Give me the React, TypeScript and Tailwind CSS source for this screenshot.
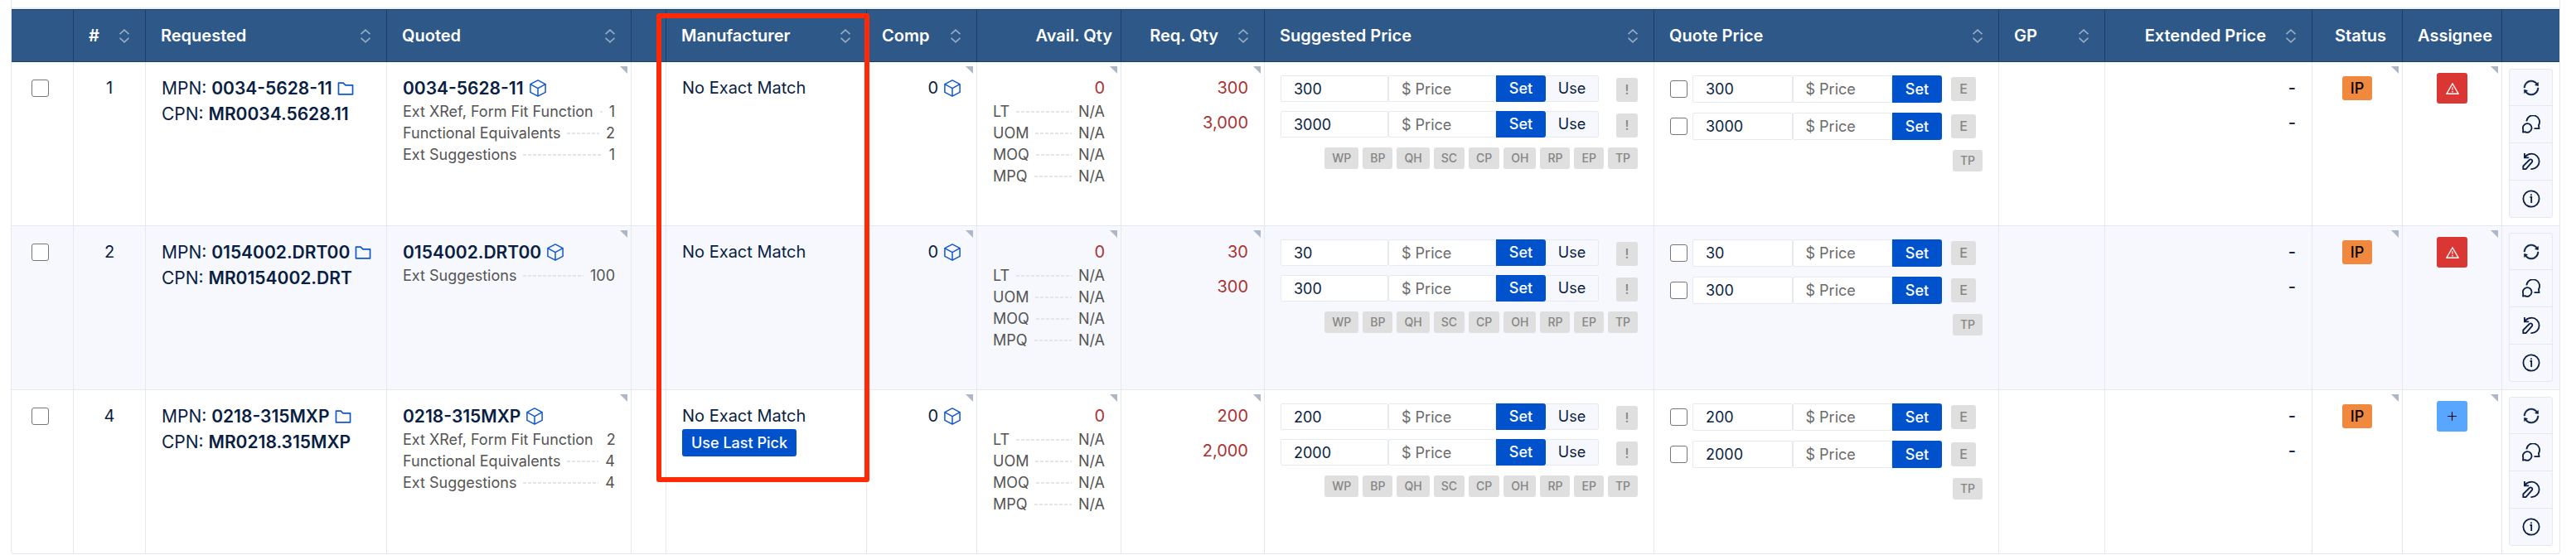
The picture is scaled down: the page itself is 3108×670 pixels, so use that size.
import type { ReactNode } from 'react'
import { AiOutlineFolder, AiOutlinePlus, AiOutlineSync, AiOutlineWarning } from 'react-icons/ai'

type Line = {
  id: number
  mpn: string
  cpn: string
  matches: { label: string; count: number }[]
  quantities: number[]
  lastPick?: boolean
  assigned?: boolean
}

const lines: Line[] = [
  {
    id: 1, mpn: '0034-5628-11', cpn: 'MR0034.5628.11', quantities: [300, 3000],
    matches: [
      { label: 'Ext XRef, Form Fit Function', count: 1 },
      { label: 'Functional Equivalents', count: 2 },
      { label: 'Ext Suggestions', count: 1 },
    ],
  },
  {
    id: 2, mpn: '0154002.DRT00', cpn: 'MR0154002.DRT', quantities: [30, 300],
    matches: [{ label: 'Ext Suggestions', count: 100 }],
  },
  {
    id: 4, mpn: '0218-315MXP', cpn: 'MR0218.315MXP', quantities: [200, 2000], lastPick: true, assigned: true,
    matches: [
      { label: 'Ext XRef, Form Fit Function', count: 2 },
      { label: 'Functional Equivalents', count: 4 },
      { label: 'Ext Suggestions', count: 4 },
    ],
  },
]

const sources = ['WP', 'BP', 'QH', 'SC', 'CP', 'OH', 'RP', 'EP', 'TP']

const thClass = 'relative h-16 border-y border-r border-[#1d4068] last:border-r-0 pl-[18px] pr-[19px] py-0 font-semibold text-left whitespace-nowrap'
const tdClass = 'relative border-r border-b border-[#e5e8ee] last:border-r-0 group-last:border-b-0 px-[19px] pt-4 align-top'
const checkboxClass = 'appearance-none block size-[21px] shrink-0 rounded-[3px] border border-[#767676] bg-white checked:bg-[#0052cc]'
const inputClass = 'h-full flex-1 min-w-0 rounded-xs border border-[#e5e9f0] bg-white px-[15px] text-lg text-[#091e42] placeholder:text-[#6b6b6b] focus:outline-none focus:border-[#0052cc]'
const setClass = 'h-full w-[60px] shrink-0 rounded-r-[3px] bg-[#0052cc] text-lg font-medium text-white'
const tagClass = 'rounded-[3px] bg-[#dfdfdf] font-medium text-[#858585]'
const partClass = 'text-[21px] font-semibold'

function SortIcon() {
  return (
    <svg viewBox="0 0 12 17" className="w-3 h-[17px]" fill="none" stroke="currentColor" strokeWidth="1.8">
      <path d="M.5 6.2 6 1.2l5.5 5M.5 10.8 6 15.8l5.5-5" />
    </svg>
  )
}

function BoxIcon() {
  return (
    <svg viewBox="0 0 20 21" className="w-5 h-[21px]" fill="none" stroke="currentColor" strokeWidth="1.5" strokeLinejoin="round">
      <path d="M10 .9 19.1 5.7v9.6L10 20.1.9 15.3V5.7zM.9 5.7 10 10.7l9.1-5M10 10.7v9.4" />
    </svg>
  )
}

function ChatIcon() {
  return (
    <svg viewBox="0 0 22 22" className="size-[22px]" fill="none" stroke="currentColor" strokeWidth="1.8" strokeLinejoin="round">
      <path d="M5.3 7.3a7.9 7.9 0 1 1 14.6 5l.7 3.9h-6.1" />
      <path d="M1 20.6l.3-3.1a5.3 5.3 0 1 1 2.3 2.6z" />
    </svg>
  )
}

function HistoryIcon() {
  return (
    <svg viewBox="0 0 22 22" className="size-[22px]" fill="none" stroke="currentColor" strokeWidth="1.8">
      <path d="M2.9 1v5.4h5.3M3.2 6C5.2 3 8.2 1.7 11.4 1.7a9.2 9.2 0 0 1 0 18.4h-1" />
      <path d="M1.3 20.200v-3.700l7.500-7.500a2 2 0 0 1 2.900 0 2 2 0 0 1 0 2.900l-7.200 8.300z" strokeLinejoin="round" />
    </svg>
  )
}

function InfoIcon() {
  return (
    <svg viewBox="0 0 22 22" className="size-[22px]" fill="none" stroke="currentColor" strokeWidth="1.8">
      <circle cx="11" cy="11" r="9.6" />
      <path d="M9.500 9h1.700v7" />
      <circle cx="11" cy="6.3" r="1" fill="currentColor" stroke="none" />
    </svg>
  )
}

function Th({ children, right }: { children: string; right?: boolean }) {
  return (
    <div className="flex items-center gap-6">
      <span className={right ? 'flex-1 text-right' : 'flex-1'}>{children}</span>
      <button type="button" aria-label={`Sort by ${children}`} className="text-[#96abc3]"><SortIcon /></button>
    </div>
  )
}

function Corner() {
  return <span className="absolute top-[5px] right-1 size-[9px] bg-[#acb8c5] [clip-path:polygon(0_0,100%_0,100%_100%)]" />
}

function Leader({ label, value }: { label: string; value: ReactNode }) {
  return (
    <div className="flex items-center gap-2 h-[26px] text-lg leading-[26px] text-[#545454] whitespace-nowrap">
      <span>{label}</span>
      <span className="flex-1 h-0.5 bg-[repeating-linear-gradient(90deg,#e3e6e9_0_4px,transparent_4px_6px)]" />
      <span>{value}</span>
    </div>
  )
}

function Row({ line }: { line: Line }) {
  return (
    <tr className="group even:bg-[#f6f8fd]">
      <td className={tdClass}>
        <input type="checkbox" aria-label={`Select line ${line.id}`} className={`${checkboxClass} mt-[5px] ml-[5px]`} />
      </td>
      <td className={`${tdClass} text-center`}>{line.id}</td>
      <td className={`${tdClass} text-[21px]`}>
        <div className="flex items-center gap-1 h-[31px] whitespace-nowrap">
          <span>MPN: <b className={partClass}>{line.mpn}</b></span>
          <button type="button" aria-label="Open folder" className="text-[#1057cb]"><AiOutlineFolder size={24} /></button>
        </div>
        <div>CPN: <b className={partClass}>{line.cpn}</b></div>
      </td>
      <td className={tdClass}>
        <Corner />
        <div className="flex items-center gap-[7px] h-[31px]">
          <b className={partClass}>{line.mpn}</b>
          <button type="button" aria-label="Part details" className="text-[#1057cb]"><BoxIcon /></button>
        </div>
        {line.matches.map(m => <Leader key={m.label} label={m.label} value={m.count} />)}
      </td>
      <td className={tdClass} />
      <td className={tdClass}>
        No Exact Match
        {line.lastPick && (
          <button type="button" className="block h-[33px] rounded-[3px] bg-[#0052cc] px-[11px] text-lg font-medium text-white">Use Last Pick</button>
        )}
      </td>
      <td className={tdClass}>
        <Corner />
        <div className="flex items-center justify-end gap-[7px] h-[31px]">
          0
          <button type="button" aria-label="Competitor parts" className="text-[#1057cb]"><BoxIcon /></button>
        </div>
      </td>
      <td className={tdClass}>
        <Corner />
        <div className="text-right text-[#a93434]">0</div>
        {['LT', 'UOM', 'MOQ', 'MPQ'].map(k => <Leader key={k} label={k} value="N/A" />)}
      </td>
      <td className={`${tdClass} text-right text-[#a93434]`}>
        <Corner />
        <div className="space-y-[11px]">
          {line.quantities.map(q => <div key={q}>{q.toLocaleString('en-US')}</div>)}
        </div>
      </td>
      <td className={tdClass}>
        <div className="space-y-[11px]">
          {line.quantities.map(q => (
            <div key={q} className="flex items-end h-8">
              <input aria-label="Suggested quantity" defaultValue={q} className={inputClass} />
              <input aria-label="Suggested price" placeholder="$ Price" className={inputClass} />
              <button type="button" className={setClass}>Set</button>
              <button type="button" className="h-full w-16 shrink-0 rounded-r-[3px] border border-l-0 border-[#e5e9f0] bg-[#f6f8fd] text-lg">Use</button>
              <span className={`${tagClass} ml-[21px] w-[26px] h-[29px] text-center text-base leading-[29px]`}>!</span>
            </div>
          ))}
        </div>
        <div className="flex justify-end gap-[5px] mt-3">
          {sources.map(s => <span key={s} className={`${tagClass} h-[26px] px-[9px] text-sm leading-[26px]`}>{s}</span>)}
        </div>
      </td>
      <td className={tdClass}>
        <div className="space-y-3">
          {line.quantities.map(q => (
            <div key={q} className="flex items-center h-[33px] pr-2">
              <input type="checkbox" aria-label={`Quote ${q}`} className={`${checkboxClass} mr-1.5`} />
              <input aria-label="Quote quantity" defaultValue={q} className={inputClass} />
              <input aria-label="Quote price" placeholder="$ Price" className={inputClass} />
              <button type="button" className={setClass}>Set</button>
              <span className={`${tagClass} ml-[11px] w-[30px] h-[29px] text-center text-base leading-[29px]`}>E</span>
            </div>
          ))}
        </div>
        <div className="flex justify-end mt-3">
          <span className={`${tagClass} h-[26px] px-[9px] text-sm leading-[26px]`}>TP</span>
        </div>
      </td>
      <td className={tdClass} />
      <td className={`${tdClass} text-right font-medium`}>
        <div className="space-y-[11px]">
          {line.quantities.map(q => <div key={q}>-</div>)}
        </div>
      </td>
      <td className={tdClass}>
        <Corner />
        <div className="mx-auto mt-px w-9 h-[29px] rounded-[3px] bg-[#f0883e] text-center text-lg leading-[29px] font-medium text-black">IP</div>
      </td>
      <td className={`${tdClass} !pt-[13px]`}>
        <Corner />
        {line.assigned ? (
          <button type="button" aria-label="Assign" className="mx-auto flex size-[37px] items-center justify-center rounded-[3px] bg-[#58a6ff] text-black"><AiOutlinePlus size={15} /></button>
        ) : (
          <button type="button" aria-label="Unassigned" className="mx-auto flex size-[37px] items-center justify-center rounded-[3px] bg-[#da3633] text-white"><AiOutlineWarning size={18} /></button>
        )}
      </td>
      <td className={`${tdClass} !px-2 !pt-2 pb-[9px]`}>
        <div className="divide-y divide-[#e5e8ee] rounded-[3px] border border-[#e5e8ee] bg-[#f6f8fd]">
          <button type="button" aria-label="Refresh" className="flex h-11 w-full items-center justify-center"><AiOutlineSync size={22} strokeWidth={20} stroke="currentColor" /></button>
          <button type="button" aria-label="Comments" className="flex h-[45px] w-full items-center justify-center"><ChatIcon /></button>
          <button type="button" aria-label="History" className="flex h-[45px] w-full items-center justify-center"><HistoryIcon /></button>
          <button type="button" aria-label="Info" className="flex h-11 w-full items-center justify-center"><InfoIcon /></button>
        </div>
      </td>
    </tr>
  )
}

export default function App() {
  return (
    <div className="bg-white pr-[19px] pl-[13px] font-['Inter',sans-serif] text-xl leading-[31px] text-[#091e42]">
      <div className="rounded-b border-x border-b border-[#e5e8ee]">
        <div className="h-[11px] border-b-2 border-[#e6eef6]" />
        <table className="w-full table-fixed border-separate border-spacing-0">
          <colgroup>
            <col className="w-[75px]" />
            <col className="w-[87px]" />
            <col className="w-[291px]" />
            <col className="w-[295px]" />
            <col className="w-[42px]" />
            <col className="w-[242px]" />
            <col className="w-[133px]" />
            <col className="w-[174px]" />
            <col className="w-[173px]" />
            <col className="w-[470px]" />
            <col className="w-[416px]" />
            <col className="w-[128px]" />
            <col className="w-[250px]" />
            <col className="w-[109px]" />
            <col className="w-[120px]" />
            <col className="w-[69px]" />
          </colgroup>
          <thead className="bg-[#2d5888] text-white">
            <tr>
              <th className={thClass} />
              <th className={thClass}><Th>#</Th></th>
              <th className={thClass}><Th>Requested</Th></th>
              <th className={thClass}><Th>Quoted</Th></th>
              <th className={thClass} />
              <th className={thClass}>
                <Th>Manufacturer</Th>
                {/* column highlight */}
                <div className="pointer-events-none absolute top-1 -left-3 -right-1 z-10 h-[566px] rounded-[3px] border-6 border-[#ff2a05]" />
              </th>
              <th className={thClass}><Th>Comp</Th></th>
              <th className={`${thClass} !pr-2.5 !text-right`}>Avail. Qty</th>
              <th className={thClass}><Th right>Req. Qty</Th></th>
              <th className={thClass}><Th>Suggested Price</Th></th>
              <th className={thClass}><Th>Quote Price</Th></th>
              <th className={thClass}><Th>GP</Th></th>
              <th className={thClass}><Th right>Extended Price</Th></th>
              <th className={`${thClass} !text-right`}>Status</th>
              <th className={`${thClass} !pr-2.5`}>Assignee</th>
              <th className={thClass} />
            </tr>
          </thead>
          <tbody>
            {lines.map(line => <Row key={line.id} line={line} />)}
          </tbody>
        </table>
      </div>
    </div>
  )
}
